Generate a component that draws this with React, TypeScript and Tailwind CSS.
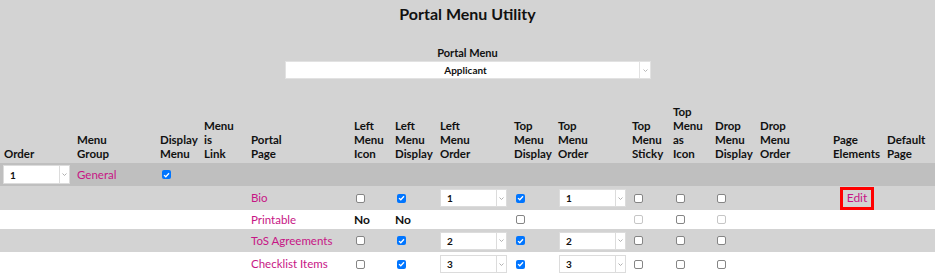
import React from "react";

const GRID =
  "grid grid-cols-[73px_83px_44px_47px_103px_41px_45px_74px_44px_74px_41px_42px_45px_73px_54px_49px] pl-[3px]";

function Cb({ checked, disabled }: { checked?: boolean; disabled?: boolean }) {
  if (checked)
    return (
      <span className="inline-flex w-[9px] h-[9px] rounded-[2px] bg-[#0075ff] items-center justify-center">
        <svg width="7" height="6" viewBox="0 0 7 6">
          <path d="M1 3.1 L2.8 4.8 L6 1.2" stroke="white" strokeWidth="1.3" fill="none" />
        </svg>
      </span>
    );
  return (
    <span
      className={
        disabled
          ? "inline-block w-[9px] h-[9px] rounded-[2px] bg-white border border-[#c6c6c6]"
          : "inline-block w-[9px] h-[9px] rounded-[2px] bg-white border border-[#858585]"
      }
    />
  );
}

function Sel({ value, tall }: { value: string; tall?: boolean }) {
  return (
    <div
      className={
        tall
          ? "flex w-[67px] h-[19px] bg-white border border-[#dcdcdc]"
          : "flex w-[67px] h-[18px] bg-white border border-[#dcdcdc]"
      }
    >
      <div className="flex-1 flex items-center pl-[6px] text-[10px] font-bold text-[#111] pt-[1px]">{value}</div>
      <div className="w-[10px] border-l border-[#dcdcdc] flex items-center justify-center">
        <svg width="5" height="3" viewBox="0 0 5 3">
          <path d="M0.5 0.5 L2.5 2.5 L4.5 0.5" stroke="#a8a8a8" strokeWidth="0.9" fill="none" />
        </svg>
      </div>
    </div>
  );
}

const headers: string[][] = [
  ["Order"],
  ["Menu", "Group"],
  ["Display", "Menu"],
  ["Menu", "is", "Link"],
  ["Portal", "Page"],
  ["Left", "Menu", "Icon"],
  ["Left", "Menu", "Display"],
  ["Left", "Menu", "Order"],
  ["Top", "Menu", "Display"],
  ["Top", "Menu", "Order"],
  ["Top", "Menu", "Sticky"],
  ["Top", "Menu", "as", "Icon"],
  ["Drop", "Menu", "Display"],
  ["Drop", "Menu", "Order"],
  ["Page", "Elements"],
  ["Default", "Page"],
];

const MAG = "text-[#c71585]";

function Cell({ children, cls }: { children?: React.ReactNode; cls?: string }) {
  return <div className={"flex items-center " + (cls ?? "")}>{children}</div>;
}

type PageRow = {
  name: string;
  bg: string;
  h: string;
  leftIcon: "cb" | "No";
  leftDisp: "cb" | "No";
  leftOrder?: string;
  topOrder?: string;
  edit?: boolean;
  printable?: boolean;
};

function Row({ r }: { r: PageRow }) {
  return (
    <div className={r.bg + " " + r.h}>
      <div className={GRID + " h-full"}>
        <Cell />
        <Cell />
        <Cell />
        <Cell />
        <Cell cls={"pl-[1px] text-[11.5px] " + MAG}>{r.name}</Cell>
        <Cell cls="pl-[3px]">
          {r.leftIcon === "cb" ? <Cb /> : <span className="-ml-[2px] text-[12px] font-bold text-[#111]">No</span>}
        </Cell>
        <Cell cls="pl-[3px]">
          {r.leftDisp === "cb" ? <Cb checked /> : <span className="-ml-[2px] text-[12px] font-bold text-[#111]">No</span>}
        </Cell>
        <Cell cls="pl-[1px]">{r.leftOrder ? <Sel value={r.leftOrder} /> : null}</Cell>
        <Cell cls="pl-[3px]">{r.printable ? <Cb /> : <Cb checked />}</Cell>
        <Cell cls="pl-[2px]">{r.topOrder ? <Sel value={r.topOrder} /> : null}</Cell>
        <Cell cls="pl-[3px]">{r.printable ? <Cb disabled /> : <Cb />}</Cell>
        <Cell cls="pl-[4px]">
          <Cb />
        </Cell>
        <Cell cls="pl-[3px]">{r.printable ? <Cb disabled /> : <Cb />}</Cell>
        <Cell />
        <Cell cls="pl-[8px]">
          {r.edit ? (
            <div className={"border-[3px] border-[#ff0000] w-[34px] h-[23px] flex items-center justify-center text-[12px] " + MAG}>
              Edit
            </div>
          ) : null}
        </Cell>
        <Cell />
      </div>
    </div>
  );
}

const rows: PageRow[] = [
  { name: "Bio", bg: "bg-[#d3d3d3]", h: "h-[24px]", leftIcon: "cb", leftDisp: "cb", leftOrder: "1", topOrder: "1", edit: true },
  { name: "Printable", bg: "bg-white", h: "h-[19px]", leftIcon: "No", leftDisp: "No", printable: true },
  { name: "ToS Agreements", bg: "bg-[#d3d3d3]", h: "h-[23px]", leftIcon: "cb", leftDisp: "cb", leftOrder: "2", topOrder: "2" },
  { name: "Checklist Items", bg: "bg-white", h: "h-[24px]", leftIcon: "cb", leftDisp: "cb", leftOrder: "3", topOrder: "3" },
];

export default function App() {
  return (
    <div
      className="w-[935px] h-[276px] overflow-hidden bg-[#d3d3d3] text-[#111]"
      style={{ fontFamily: "Lato, 'Open Sans', sans-serif" }}
    >
      <div className="pt-[4px] text-center text-[16px] leading-[20px] font-bold">Portal Menu Utility</div>
      <div className="mt-[22px] text-center text-[11px] leading-[14px] font-bold">Portal Menu</div>
      <div className="mt-[1px] flex justify-center">
        <div className="ml-[1px] flex w-[366px] h-[18px] bg-white border border-[#e2e2e2]">
          <div className="flex-1 flex items-center justify-center text-[10px] font-bold pt-[1px] pl-[6px]">Applicant</div>
          <div className="w-[11px] border-l border-[#e2e2e2] flex items-center justify-center">
            <svg width="5" height="3" viewBox="0 0 5 3">
              <path d="M0.5 0.5 L2.5 2.5 L4.5 0.5" stroke="#b0b0b0" strokeWidth="0.9" fill="none" />
            </svg>
          </div>
        </div>
      </div>
      <div className={GRID + " h-[84px] items-end pb-[2px]"}>
        {headers.map((h, i) => (
          <div key={i} className="pl-[1px] text-[11.5px] leading-[14px] font-bold whitespace-nowrap">
            {h.map((l, j) => (
              <div key={j}>{l}</div>
            ))}
          </div>
        ))}
      </div>
      <div className="bg-[#bfbfbf] h-[23px]">
        <div className={GRID + " h-full"}>
          <Cell>
            <Sel value="1" tall />
          </Cell>
          <Cell cls={"pl-[1px] text-[11.5px] " + MAG}>General</Cell>
          <Cell cls="pl-[3px]">
            <Cb checked />
          </Cell>
        </div>
      </div>
      {rows.map((r) => (
        <Row key={r.name} r={r} />
      ))}
    </div>
  );
}
